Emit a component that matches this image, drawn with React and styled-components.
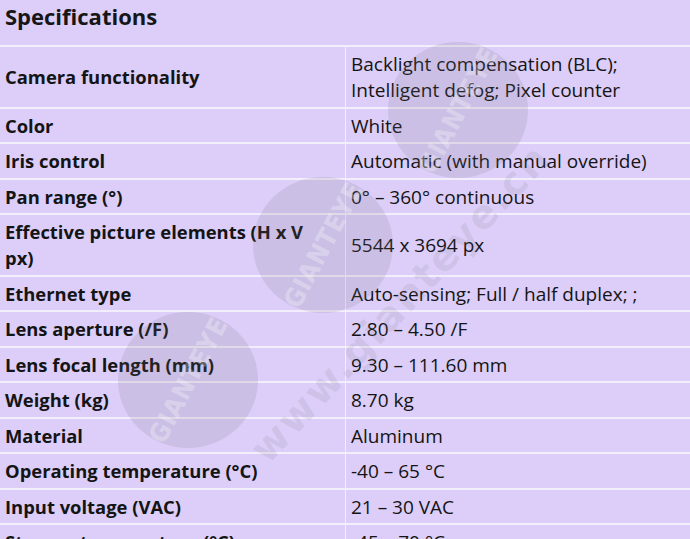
import styled, { createGlobalStyle } from "styled-components";

const GlobalStyle = createGlobalStyle`
  html, body {
    margin: 0;
    padding: 0;
    background: #dccef8;
    overflow: hidden;
  }
  body {
    font-family: "Open Sans", "Noto Sans", sans-serif;
    color: #141414;
  }
`;

const SPECS = [
  ["Camera functionality", "Backlight compensation (BLC); Intelligent defog; Pixel counter"],
  ["Color", "White"],
  ["Iris control", "Automatic (with manual override)"],
  ["Pan range (°)", "0° – 360° continuous"],
  ["Effective picture elements (H x V px)", "5544 x 3694 px"],
  ["Ethernet type", "Auto-sensing; Full / half duplex; ;"],
  ["Lens aperture (/F)", "2.80 – 4.50 /F"],
  ["Lens focal length (mm)", "9.30 – 111.60 mm"],
  ["Weight (kg)", "8.70 kg"],
  ["Material", "Aluminum"],
  ["Operating temperature (°C)", "-40 – 65 °C"],
  ["Input voltage (VAC)", "21 – 30 VAC"],
  ["Storage temperature (°C)", "-45 – 70 °C"],
];

const CIRCLES = [
  { x: 458, y: 110 },
  { x: 323, y: 245 },
  { x: 188, y: 380 },
];

export default function App() {
  return (
    <Page>
      <GlobalStyle />
      <Title>Specifications</Title>
      <Table>
        <tbody>
          {SPECS.map(([label, value]) => (
            <Row key={label}>
              <Label>{label}</Label>
              <Value>{value}</Value>
            </Row>
          ))}
        </tbody>
      </Table>
      <Watermark aria-hidden="true">
        {CIRCLES.map((c) => (
          <Stamp key={c.x} style={{ left: c.x - 70, top: c.y - 68 }}>
            <span>GIANTEYE</span>
          </Stamp>
        ))}
        <Url>www.gianteye.cn</Url>
      </Watermark>
    </Page>
  );
}

const Page = styled.div`
  position: relative;
  width: 690px;
  height: 539px;
  overflow: hidden;
  background: #dccef8;
`;

const Title = styled.h2`
  margin: 0;
  height: 45px;
  padding: 0 5px;
  font-size: 22px;
  line-height: 33px;
  font-weight: 700;
  color: #161616;
  border-bottom: 2px solid #f3eefc;
`;

const Table = styled.table`
  width: 100%;
  border-collapse: collapse;
  table-layout: fixed;
`;

const Row = styled.tr`
  border-bottom: 2px solid #f3eefc;
`;

const Label = styled.td`
  width: 325px;
  padding: 4px 15px 3.5px 5px;
  font-size: 18.4px;
  line-height: 26px;
  font-weight: 700;
  vertical-align: middle;
  border-right: 1px solid #f3eefc;
`;

const Value = styled.td`
  padding: 4px 5px 3.5px 5px;
  font-size: 19px;
  line-height: 26px;
  font-weight: 400;
  vertical-align: middle;
`;

const Watermark = styled.div`
  position: absolute;
  inset: 0;
  pointer-events: none;
`;

const Stamp = styled.div`
  position: absolute;
  width: 140px;
  height: 136px;
  border-radius: 50%;
  background: rgba(120, 110, 130, 0.16);
  display: flex;
  align-items: center;
  justify-content: center;
  span {
    transform: rotate(-62deg);
    font-family: "DejaVu Sans Condensed", "Liberation Sans Narrow", sans-serif;
    font-weight: 700;
    font-size: 26px;
    letter-spacing: 1px;
    color: rgba(255, 255, 255, 0.3);
  }
`;

const Url = styled.div`
  position: absolute;
  left: 160px;
  top: 280px;
  width: 480px;
  text-align: center;
  transform: rotate(-47deg);
  font-family: "DejaVu Sans", sans-serif;
  font-weight: 700;
  font-size: 40px;
  letter-spacing: 2px;
  color: rgba(120, 110, 130, 0.13);
`;
